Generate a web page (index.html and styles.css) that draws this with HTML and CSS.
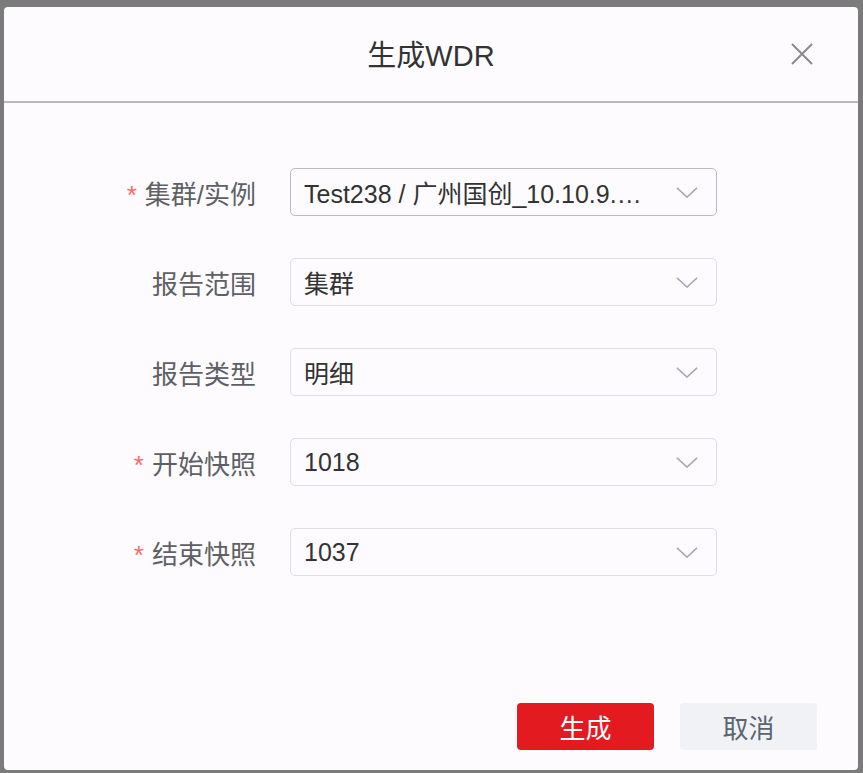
FILE: index.html
```html
<!DOCTYPE html>
<html lang="zh-CN">
<head>
<meta charset="utf-8">
<title>生成WDR</title>
<link rel="stylesheet" href="styles.css">
</head>
<body>
<div class="dialog">
  <div class="dialog-header">
    <span class="spacer"></span>
    <h1 class="dialog-title">生成WDR</h1>
    <button class="close-btn" aria-label="关闭">
      <svg width="22" height="22" viewBox="0 0 22 22"><path d="M1 1L21 21M21 1L1 21" stroke="#8a8a8a" stroke-width="2" fill="none"/></svg>
    </button>
  </div>
  <div class="divider"></div>
  <form class="form">
    <div class="row">
      <label class="label"><span class="req">*</span>集群/实例</label>
      <div class="select focused"><span class="value">Test238 / 广州国创_10.10.9.…</span><svg class="chev" viewBox="0 0 24 12"><path d="M1 1L12 11L23 1" stroke="#a3a7b0" stroke-width="1.6" fill="none"/></svg></div>
    </div>
    <div class="row">
      <label class="label">报告范围</label>
      <div class="select"><span class="value">集群</span><svg class="chev" viewBox="0 0 24 12"><path d="M1 1L12 11L23 1" stroke="#a3a7b0" stroke-width="1.6" fill="none"/></svg></div>
    </div>
    <div class="row">
      <label class="label">报告类型</label>
      <div class="select"><span class="value">明细</span><svg class="chev" viewBox="0 0 24 12"><path d="M1 1L12 11L23 1" stroke="#a3a7b0" stroke-width="1.6" fill="none"/></svg></div>
    </div>
    <div class="row">
      <label class="label"><span class="req">*</span>开始快照</label>
      <div class="select"><span class="value">1018</span><svg class="chev" viewBox="0 0 24 12"><path d="M1 1L12 11L23 1" stroke="#a3a7b0" stroke-width="1.6" fill="none"/></svg></div>
    </div>
    <div class="row">
      <label class="label"><span class="req">*</span>结束快照</label>
      <div class="select"><span class="value">1037</span><svg class="chev" viewBox="0 0 24 12"><path d="M1 1L12 11L23 1" stroke="#a3a7b0" stroke-width="1.6" fill="none"/></svg></div>
    </div>
  </form>
  <div class="footer">
    <button class="btn btn-primary">生成</button>
    <button class="btn btn-default">取消</button>
  </div>
</div>
</body>
</html>
```
FILE: styles.css
```css
* { box-sizing: border-box; }
html, body { margin: 0; padding: 0; }
body {
  background: #7b7b7b;
  width: 863px;
  height: 773px;
  overflow: hidden;
  padding: 7px 5px 3px 4px;
  font-family: "Liberation Sans", "Noto Sans CJK SC", sans-serif;
}
.dialog {
  width: 854px;
  height: 763px;
  background: #fdfbfd;
  border-radius: 4px;
  display: flex;
  flex-direction: column;
}
.dialog-header {
  height: 94px;
  display: grid;
  grid-template-columns: 1fr auto 1fr;
  align-items: center;
}
.dialog-title {
  margin: 0;
  font-weight: normal;
  font-size: 29px;
  color: #333;
  padding-bottom: 2px;
}
.close-btn {
  justify-self: end;
  margin-right: 45px;
  width: 22px;
  height: 22px;
  padding: 0;
  border: 0;
  background: transparent;
  display: flex;
}
.divider {
  height: 2px;
  background: #b9b9b9;
}
.form {
  margin: 0;
  padding-top: 65px;
  display: flex;
  flex-direction: column;
  gap: 42px;
}
.row {
  display: grid;
  grid-template-columns: 252px 427px;
  column-gap: 34px;
  align-items: center;
}
.label {
  text-align: right;
  font-size: 26px;
  color: #5e6066;
}
.req {
  color: #f56c6c;
  margin-right: 8px;
}
.select {
  height: 48px;
  border: 1.5px solid #dcdfe6;
  border-radius: 5px;
  display: flex;
  align-items: center;
  padding: 0 18px 0 13px;
  background: #fdfbfd;
}
.select.focused { border-color: #b7bbc5; }
.value {
  flex: 1;
  min-width: 0;
  white-space: nowrap;
  font-size: 25px;
  color: #333;
  margin-right: 22px;
}
.chev {
  width: 22px;
  height: 11px;
  flex: none;
}
.footer {
  margin-top: auto;
  display: flex;
  justify-content: flex-end;
  gap: 26px;
  padding: 0 41px 20px 0;
}
.btn {
  width: 137px;
  height: 47px;
  border: 0;
  border-radius: 4px;
  font-family: "Liberation Sans", "Noto Sans CJK SC", sans-serif;
  font-size: 26px;
  padding: 0;
}
.btn-primary { background: #e31b20; color: #fff; }
.btn-default { background: #f0f2f5; color: #5b6472; }
```
